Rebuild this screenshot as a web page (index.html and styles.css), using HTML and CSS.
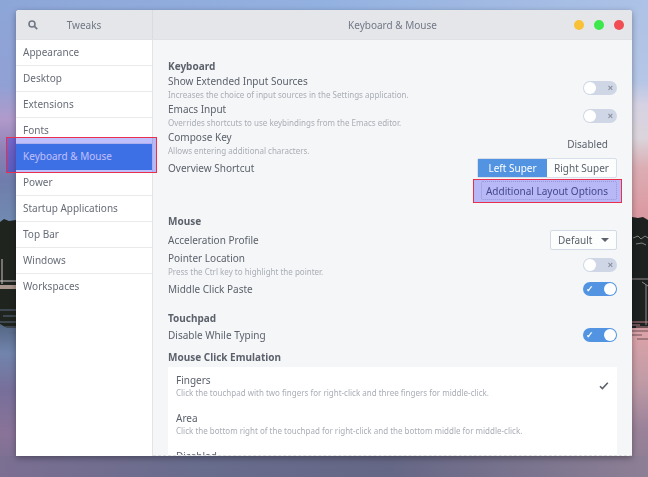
FILE: index.html
```html
<!DOCTYPE html>
<html lang="en">
<head>
    <meta charset="UTF-8">
    <meta name="viewport" content="width=device-width, initial-scale=1.0">
    <title>Tweaks</title>
    <link rel="stylesheet" href="styles.css">
</head>
<body>
    <!-- Desktop wallpaper: lake at dusk -->
    <svg class="wallpaper" viewBox="0 0 648 477" preserveAspectRatio="none" aria-hidden="true">
        <defs>
            <linearGradient id="left-side" x1="0" y1="0" x2="0" y2="1">
                <stop offset="0" stop-color="#8da6d8"/>
                <stop offset=".18" stop-color="#91a0d4"/>
                <stop offset=".25" stop-color="#b09acb"/>
                <stop offset=".32" stop-color="#8d7fb4"/>
                <stop offset=".38" stop-color="#6f7dac"/>
                <stop offset=".47" stop-color="#718bb1"/>
                <stop offset=".66" stop-color="#4a5c76"/>
                <stop offset=".74" stop-color="#7184ac"/>
                <stop offset=".82" stop-color="#776f9a"/>
                <stop offset=".91" stop-color="#8a7398"/>
                <stop offset="1" stop-color="#736f90"/>
            </linearGradient>
            <linearGradient id="right-side" x1="0" y1="0" x2="0" y2="1">
                <stop offset="0" stop-color="#adc2e6"/>
                <stop offset=".17" stop-color="#b5c6e6"/>
                <stop offset=".22" stop-color="#d5d2e3"/>
                <stop offset=".29" stop-color="#dbd4db"/>
                <stop offset=".35" stop-color="#dbaeb4"/>
                <stop offset=".44" stop-color="#dc9ba3"/>
                <stop offset=".64" stop-color="#b5868c"/>
                <stop offset=".7" stop-color="#dba2a8"/>
                <stop offset=".8" stop-color="#c09ba6"/>
                <stop offset=".9" stop-color="#9a8299"/>
                <stop offset="1" stop-color="#8b7d93"/>
            </linearGradient>
            <linearGradient id="sky">
                <stop offset="0" stop-color="#8da6d8"/>
                <stop offset=".5" stop-color="#93b1e0"/>
                <stop offset="1" stop-color="#adc2e6"/>
            </linearGradient>
            <linearGradient id="water">
                <stop offset="0" stop-color="#7b6f92"/>
                <stop offset=".3" stop-color="#686c8d"/>
                <stop offset=".6" stop-color="#656786"/>
                <stop offset="1" stop-color="#8d7f95"/>
            </linearGradient>
        </defs>
        <rect width="324" height="477" fill="url(#left-side)"/>
        <rect x="324" width="324" height="477" fill="url(#right-side)"/>
        <rect width="648" height="10" fill="url(#sky)"/>
        <rect y="456" width="648" height="21" fill="url(#water)"/>
        <path d="M0 222l4-3 5 2 7-1v108H7l-7-4z" fill="#20241f"/>
        <path d="M0 285h16v4H0z" fill="#a8958c"/>
        <path d="M2 259v25M0 281h16" stroke="#c9c4c4"/>
        <path d="M0 310h16M3 316h13M0 322h16M5 327h11M9 333h7" stroke="#5c6a80"/>
        <path d="M632 217l6 1 5-1 5 3v108h-16z" fill="#1d211f"/>
        <path d="M633 238l5-2 3 3 4-3 3 2M636 244l6-1 4 2" stroke="#84857f" fill="none"/>
        <path d="M632 279h16M642 282l6 4M646 285v40" stroke="#94898c"/>
        <path d="M632 331h16M632 335h10M637 339h11" stroke="#6c5158"/>
        <path d="M632 322h16M636 327h12M632 325h8" stroke="#bd7f86"/>
    </svg>

    <div class="window">
        <header class="titlebar">
            <div class="titlebar-side">
                <button class="search-btn" aria-label="Search">
                    <svg viewBox="0 0 10 10" width="10" height="10">
                        <circle cx="4" cy="4" r="3" fill="none" stroke="currentColor" stroke-width="1.6"/>
                        <path d="M6.2 6.2l3 3" stroke="currentColor" stroke-width="1.8"/>
                    </svg>
                </button>
                <span class="app-title">Tweaks</span>
            </div>
            <div class="titlebar-main">
                <h1>Keyboard &amp; Mouse</h1>
                <div class="window-buttons">
                    <button class="minimize" aria-label="Minimize"></button>
                    <button class="maximize" aria-label="Maximize"></button>
                    <button class="close" aria-label="Close"></button>
                </div>
            </div>
        </header>

        <div class="body">
            <nav class="sidebar">
                <a href="#">Appearance</a>
                <a href="#">Desktop</a>
                <a href="#">Extensions</a>
                <a href="#">Fonts</a>
                <a href="#" class="active">Keyboard &amp; Mouse<span class="highlight"></span></a>
                <a href="#">Power</a>
                <a href="#">Startup Applications</a>
                <a href="#">Top Bar</a>
                <a href="#">Windows</a>
                <a href="#">Workspaces</a>
            </nav>

            <main class="content">
                <section class="group">
                    <h2>Keyboard</h2>
                    <div class="row">
                        <div class="text">
                            <label for="extended">Show Extended Input Sources</label>
                            <p>Increases the choice of input sources in the Settings application.</p>
                        </div>
                        <input type="checkbox" class="switch" id="extended">
                    </div>
                    <div class="row">
                        <div class="text">
                            <label for="emacs">Emacs Input</label>
                            <p>Overrides shortcuts to use keybindings from the Emacs editor.</p>
                        </div>
                        <input type="checkbox" class="switch" id="emacs">
                    </div>
                    <div class="row">
                        <div class="text">
                            <label for="compose">Compose Key</label>
                            <p>Allows entering additional characters.</p>
                        </div>
                        <button class="flat-btn" id="compose">Disabled</button>
                    </div>
                    <div class="row">
                        <span>Overview Shortcut</span>
                        <div class="button-group">
                            <button class="selected">Left Super</button>
                            <button>Right Super</button>
                        </div>
                    </div>
                    <div class="row row-end">
                        <button class="layout-btn">Additional Layout Options<span class="highlight"></span></button>
                    </div>
                </section>

                <section class="group group-spaced">
                    <h2>Mouse</h2>
                    <div class="row">
                        <label for="acceleration">Acceleration Profile</label>
                        <div class="select">
                            <select id="acceleration">
                                <option>Default</option>
                                <option>Flat</option>
                                <option>Adaptive</option>
                            </select>
                        </div>
                    </div>
                    <div class="row">
                        <div class="text">
                            <label for="pointer">Pointer Location</label>
                            <p>Press the Ctrl key to highlight the pointer.</p>
                        </div>
                        <input type="checkbox" class="switch" id="pointer">
                    </div>
                    <div class="row">
                        <label for="paste">Middle Click Paste</label>
                        <input type="checkbox" class="switch" id="paste" checked>
                    </div>
                </section>

                <section class="group group-joined">
                    <h2>Touchpad</h2>
                    <div class="row">
                        <label for="typing">Disable While Typing</label>
                        <input type="checkbox" class="switch" id="typing" checked>
                    </div>
                </section>

                <section class="group">
                    <h2>Mouse Click Emulation</h2>
                    <div class="options">
                        <label class="option">
                            <input type="radio" name="emulation" checked>
                            <span class="option-text">Fingers
                                <small>Click the touchpad with two fingers for right-click and three fingers for middle-click.</small>
                            </span>
                            <svg viewBox="0 0 10 8" width="10" height="8">
                                <path d="M1 4.2l2.4 2.4L8.8.8" fill="none" stroke="currentColor" stroke-width="1.6"/>
                            </svg>
                        </label>
                        <label class="option">
                            <input type="radio" name="emulation">
                            <span class="option-text">Area
                                <small>Click the bottom right of the touchpad for right-click and the bottom middle for middle-click.</small>
                            </span>
                        </label>
                        <label class="option">
                            <input type="radio" name="emulation">
                            <span class="option-text">Disabled</span>
                        </label>
                    </div>
                </section>
            </main>
        </div>
    </div>
</body>
</html>
```
FILE: styles.css
```css
* {
    box-sizing: border-box;
}

body {
    display: flex;
    height: 100vh;
    margin: 0;
    padding: 10px 16px 21px;
    font-family: "Noto Sans", "Open Sans", sans-serif;
    font-size: 10px;
    line-height: 14px;
    color: #5c616c;
}

button, select {
    margin: 0;
    padding: 0;
    border: none;
    background: none;
    font: inherit;
    color: inherit;
}

h1, h2, p {
    margin: 0;
    font-size: 10px;
}

.wallpaper {
    position: fixed;
    inset: 0;
    z-index: -1;
    width: 100%;
    height: 100%;
}

.window {
    display: flex;
    flex-direction: column;
    flex: 1;
    min-width: 0;
    background-color: #f5f6f7;
    border-radius: 3px 3px 0 0;
    box-shadow: 0 2px 6px rgba(0, 0, 0, 0.35);
}

/* Title bar */
.titlebar {
    display: flex;
    height: 30px;
    background-color: #e4e6ea;
    border-radius: 3px 3px 0 0;
    border-bottom: 1px solid #dfe1e6;
    color: #727885;
}

.titlebar-side {
    display: flex;
    align-items: center;
    width: 137px;
    padding-left: 12px;
    border-right: 1px solid #d8dbe1;
}

.search-btn {
    display: flex;
}

.app-title {
    flex: 1;
    padding-right: 22px;
    text-align: center;
}

.titlebar-main {
    display: grid;
    grid-template-columns: 1fr auto 1fr;
    align-items: center;
    flex: 1;
}

.titlebar-main h1 {
    grid-column: 2;
    font-weight: normal;
}

.window-buttons {
    display: flex;
    justify-content: flex-end;
    gap: 10px;
    padding-right: 8px;
}

.window-buttons button {
    width: 10px;
    height: 10px;
    border-radius: 50%;
}

.minimize {
    background-color: #f9c236;
}

.maximize {
    background-color: #3ce84b;
}

.close {
    background-color: #f14e54;
}

/* Sidebar */
.body {
    display: flex;
    flex: 1;
    min-height: 0;
}

.sidebar {
    width: 137px;
    background-color: white;
    border-right: 1px solid #e2e4e8;
}

.sidebar a {
    display: block;
    height: 26px;
    padding-left: 7px;
    border-bottom: 1px solid #e9eaec;
    line-height: 25px;
    color: #676c77;
    text-decoration: none;
}

.sidebar a:last-child {
    border-bottom: none;
}

.sidebar .active {
    position: relative;
    background-color: #5294e2;
    border-bottom-color: #5294e2;
    color: white;
}

.highlight {
    position: absolute;
    z-index: 1;
    background-color: rgba(0, 0, 240, 0.25);
    border: 1px solid #e8304e;
    pointer-events: none;
}

.sidebar .highlight {
    inset: -7px -5px -4px -10px;
}

/* Settings */
.content {
    flex: 1;
    min-width: 0;
    padding: 18px 15px 0;
    overflow: hidden;
    border-bottom: 1px dashed #dcdddf;
}

.group {
    margin-bottom: 12px;
}

.group-spaced {
    display: grid;
    gap: 1px;
}

.group-joined {
    margin-bottom: 5px;
}

h2 {
    line-height: 16px;
    font-weight: bold;
}

.row {
    display: flex;
    align-items: center;
    justify-content: space-between;
    min-height: 18px;
}

.row-end {
    justify-content: flex-end;
    padding: 3px 0 1px;
}

label {
    display: block;
}

.row p {
    font-size: 8px;
    color: #a9adb5;
}

.switch {
    appearance: none;
    position: relative;
    width: 34px;
    height: 14px;
    margin: 0;
    border-radius: 7px;
    background-color: #cfd6e6;
}

.switch::before {
    content: "";
    position: absolute;
    top: 1px;
    left: 1px;
    width: 12px;
    height: 12px;
    border-radius: 50%;
    background-color: white;
}

.switch::after {
    content: "×";
    position: absolute;
    top: 0;
    right: 4px;
    font-size: 9px;
    font-weight: bold;
    line-height: 14px;
    color: #868c9a;
}

.switch:checked {
    background-color: #5294e2;
}

.switch:checked::before {
    left: 21px;
}

.switch:checked::after {
    content: "✓";
    right: 23px;
    color: white;
}

.flat-btn {
    padding-right: 9px;
}

.button-group {
    display: flex;
    border: 1px solid #d8deea;
    border-radius: 2px;
    background-color: #fcfdfd;
}

.button-group button {
    width: 69px;
    height: 18px;
}

.button-group .selected {
    background-color: #5294e2;
    color: white;
}

.layout-btn {
    position: relative;
    height: 19px;
    padding: 0 8px 0 4px;
    border: 1px dotted #c6c9d4;
    border-radius: 2px;
}

.layout-btn .highlight {
    inset: -3px -6px -4px -9px;
}

.select {
    position: relative;
}

.select::after {
    content: "";
    position: absolute;
    top: 8px;
    right: 8px;
    border: 4px solid transparent;
    border-top-color: #5c616c;
    border-bottom: none;
    pointer-events: none;
}

select {
    appearance: none;
    width: 67px;
    height: 20px;
    padding-left: 7px;
    border: 1px solid #d3dae6;
    border-radius: 2px;
    background-color: #fcfdfd;
}

.options {
    margin-top: 2px;
    background-color: white;
}

.option {
    display: flex;
    align-items: center;
    justify-content: space-between;
    padding: 7px 8px;
    line-height: 13px;
}

.option input {
    appearance: none;
    width: 0;
    margin: 0;
}

.option-text {
    flex: 1;
}

.option small {
    display: block;
    font-size: 8px;
    line-height: 11px;
    color: #a9adb5;
}
```
